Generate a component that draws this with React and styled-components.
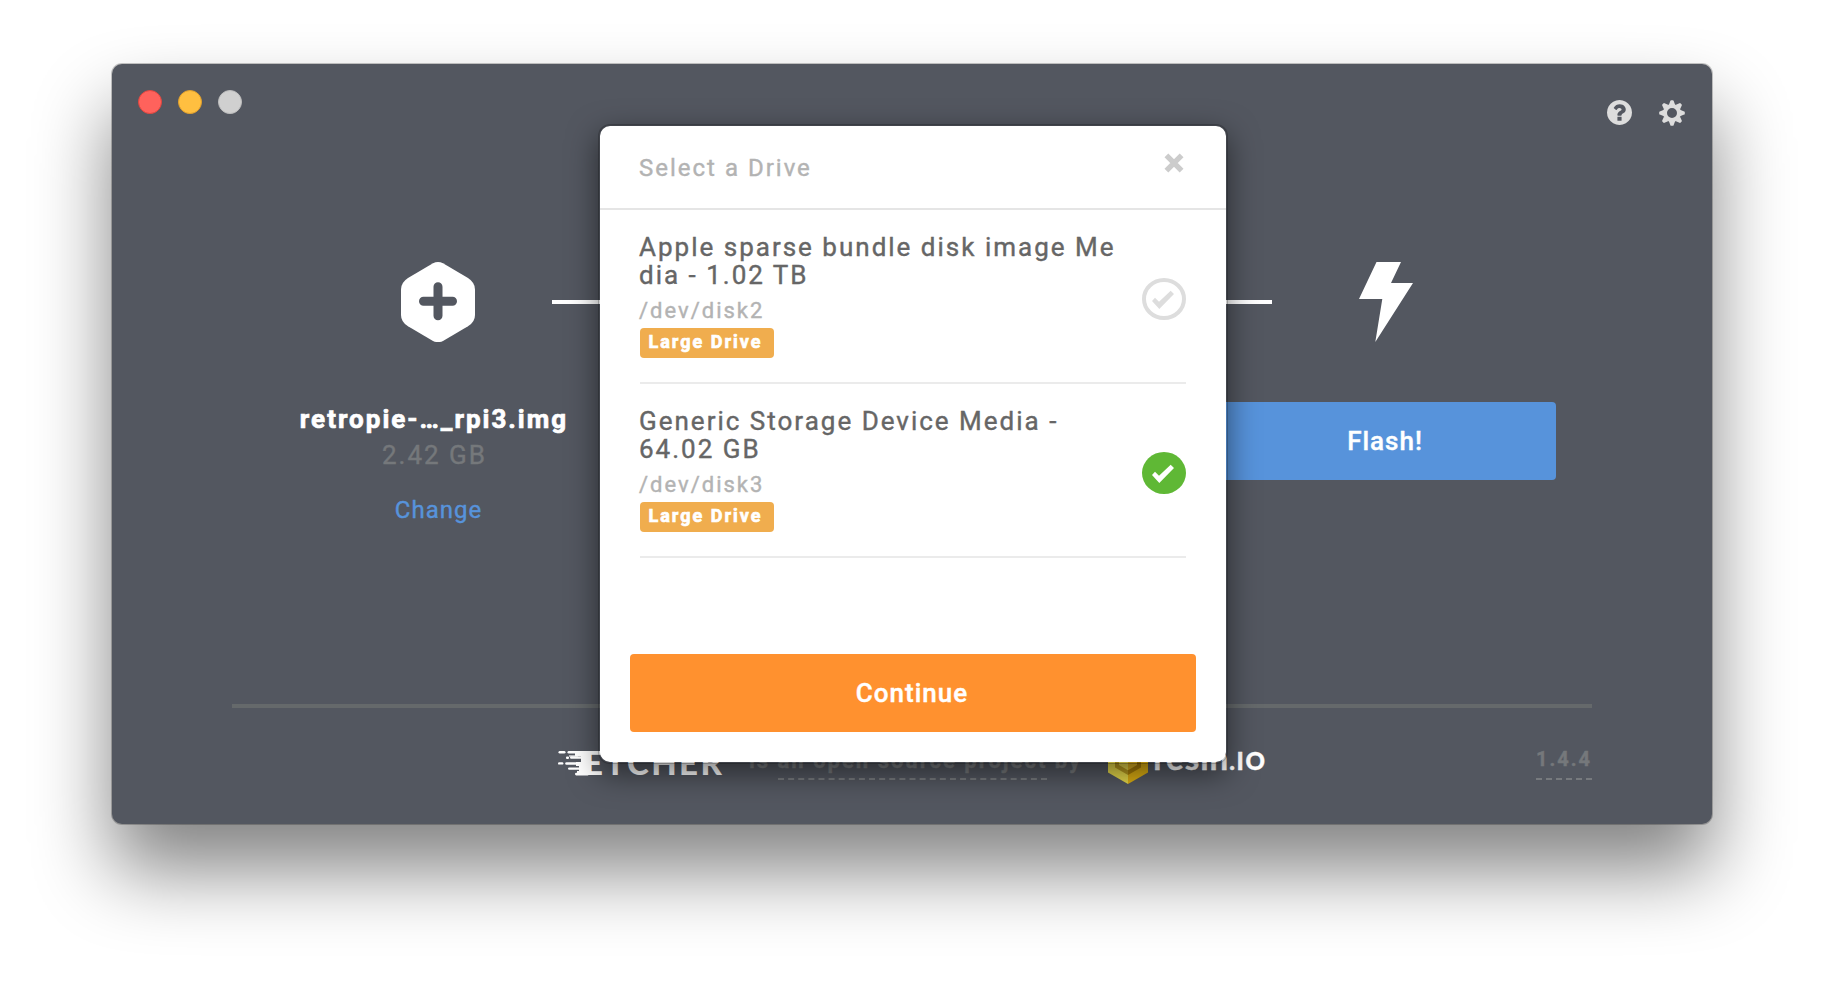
import React from 'react';
import styled, { createGlobalStyle } from 'styled-components';

const GlobalStyle = createGlobalStyle`
  * { box-sizing: border-box; }
  html, body { margin: 0; padding: 0; }
  body {
    background: #fff;
    overflow: hidden;
    font-family: Roboto, "Liberation Sans", sans-serif;
    letter-spacing: 2px;
    -webkit-text-stroke-width: 0.4px;
  }
`;

const Desktop = styled.div`
  height: 984px;
  padding: 64px 112px;
  background: #fff;
`;

const Window = styled.main`
  position: relative;
  display: flex;
  flex-direction: column;
  width: 1600px;
  height: 760px;
  border-radius: 10px;
  background: #535760;
  box-shadow: 0 0 0 1px rgba(0, 0, 0, 0.22), 0 46px 78px rgba(0, 0, 0, 0.49);
`;

const TitleBar = styled.header`
  display: flex;
  justify-content: space-between;
  height: 198px;
  padding: 26px 27px 0 26px;
`;

const TrafficLights = styled.div`
  display: flex;
  gap: 16px;
`;

const Light = styled.span`
  width: 24px;
  height: 24px;
  border-radius: 50%;
  background: ${(p) => p.$fill};
  border: 1px solid ${(p) => p.$edge};
`;

const Tools = styled.nav`
  display: flex;
  gap: 27px;
  padding-top: 10px;
`;

const Steps = styled.div`
  display: flex;
  align-items: center;
  height: 80px;
  padding-left: 289px;
`;

const Connector = styled.div`
  width: 720px;
  height: 4px;
  margin: 0 87px 0 77px;
  background: #fff;
`;

const Columns = styled.section`
  display: grid;
  grid-template-columns: repeat(3, 474px);
  justify-content: center;
  height: 362px;
  padding-top: 60px;
`;

const Column = styled.div`
  display: flex;
  flex-direction: column;
  align-items: center;
`;

const FileName = styled.div`
  margin: 2px 8px 0 0;
  font-size: 26px;
  line-height: 30px;
  font-weight: 700;
  color: #fff;
  -webkit-text-stroke-width: 0.7px;
`;

const FileSize = styled.div`
  margin: 6px 7px 0 0;
  font-size: 26px;
  line-height: 30px;
  color: #75787b;
`;

const ChangeLink = styled.a`
  margin: 26px 0 0 1px;
  font-size: 24px;
  line-height: 28px;
  letter-spacing: 1px;
  color: #5793db;
`;

const Button = styled.button`
  width: ${(p) => p.$width}px;
  height: 78px;
  flex: none;
  padding: 0 2px 0 0;
  border: 0;
  border-radius: 4px;
  background: ${(p) => p.$color};
  color: #fff;
  font: 500 26px/30px Roboto, "Liberation Sans", sans-serif;
  letter-spacing: 1px;
`;

const Footer = styled.footer`
  display: flex;
  align-items: flex-start;
  margin: 0 120px;
  border-top: 4px solid #65696b;
`;

const EtcherLogo = styled.div`
  display: flex;
  width: 168px;
  margin: 34px 0 0 326px;
  svg { flex: none; margin: 9px -6px 0 0; }
`;

const EtcherName = styled.span`
  font: 900 33px/40px Lato, sans-serif;
  letter-spacing: 2.4px;
  color: #fff;
  -webkit-text-stroke-width: 0;
`;

const Tagline = styled.div`
  margin: 40px 0 0 23px;
  white-space: pre;
  font-size: 22px;
  line-height: 25px;
  font-weight: 700;
  color: #75787b;
`;

const DashedLink = styled.a`
  display: inline-block;
  padding-bottom: 5px;
  border-bottom: 2px dashed #777a7e;
`;

const ResinLogo = styled.div`
  display: flex;
  align-items: flex-start;
  margin: 29px 0 0 26px;
  svg { margin: 1px 5px 0 0; }
`;

const ResinName = styled.span`
  font: 700 33px/40px Lato, sans-serif;
  letter-spacing: 1px;
  color: #fff;
`;

const ResinSuffix = styled.span`
  font-size: 24px;
  font-weight: 900;
  letter-spacing: 1.7px;
`;

const Version = styled.a`
  margin: 39px 0 0 auto;
  padding-bottom: 7px;
  border-bottom: 2px dashed #777a7e;
  font-size: 20px;
  line-height: 24px;
  font-weight: 700;
  color: #75787b;
`;

const Modal = styled.section`
  position: absolute;
  left: 486px;
  top: 60px;
  display: flex;
  flex-direction: column;
  width: 630px;
  height: 640px;
  border: 2px solid rgba(0, 0, 0, 0.2);
  border-radius: 12px;
  background: #fff;
  background-clip: padding-box;
  box-shadow: 0 10px 30px rgba(0, 0, 0, 0.5);
`;

const ModalHeader = styled.header`
  display: flex;
  justify-content: space-between;
  height: 84px;
  padding: 28px 42px 0 39px;
  border-bottom: 2px solid #e5e5e5;
`;

const ModalTitle = styled.h4`
  margin: 0;
  font-size: 24px;
  line-height: 28px;
  font-weight: 400;
  color: #b3b3b3;
`;

const CloseIcon = styled.svg`
  margin-top: -1px;
`;

const DriveList = styled.ul`
  flex: 1;
  margin: 0;
  padding: 0 40px;
  list-style: none;
`;

const DriveItem = styled.li`
  display: flex;
  justify-content: space-between;
  height: 174px;
  padding-top: 23px;
  border-bottom: 2px solid #ebebeb;
  > svg { flex: none; margin-top: 45px; }
`;

const DriveInfo = styled.div`
  margin-left: -1px;
`;

const DriveName = styled.div`
  white-space: pre;
  font-size: 26px;
  line-height: 28px;
  color: #666;
`;

const DrivePath = styled.div`
  margin-top: 9px;
  font-size: 22px;
  line-height: 25px;
  color: #b3b3b3;
`;

const Badge = styled.span`
  display: block;
  width: 134px;
  height: 30px;
  margin: 5px 0 0 1px;
  padding: 1px 0 0 8.5px;
  border-radius: 4px;
  background: #f0ad4e;
  font-size: 18px;
  line-height: 25px;
  font-weight: 700;
  letter-spacing: 2px;
  color: #fff;
  -webkit-text-stroke-width: 0.7px;
`;

const ModalFooter = styled.footer`
  padding: 0 30px 30px;
`;

const CHECK = '10,23 13,19.7 17,23.7 28.7,12.7 32,16 17.3,31';

function CheckMark({ selected }) {
  return (
    <svg width="44" height="42" viewBox="0 0 44 42">
      {selected ? (
        <ellipse cx="22" cy="21" rx="22" ry="21" fill="#5fb835" />
      ) : (
        <ellipse cx="22" cy="21" rx="20" ry="19" fill="none" stroke="#ddd" strokeWidth="4" />
      )}
      <polygon points={CHECK} fill={selected ? '#fff' : '#ddd'} />
    </svg>
  );
}

function HelpIcon() {
  return (
    <svg width="25" height="25" viewBox="128 128 1536 1536" fill="#ddd">
      <path d="M1024 1376v-192q0-14-9-23t-23-9h-192q-14 0-23 9t-9 23v192q0 14 9 23t23 9h192q14 0 23-9t9-23zM1280 704q0-88-55.5-163t-138.5-116-170-41q-243 0-371 213-15 24 8 42l132 100q7 6 19 6 16 0 25-12 53-68 86-92 34-24 86-24 48 0 85.5 26t37.5 59q0 38-20 61t-68 45q-63 28-115.5 86.5t-52.5 125.5v36q0 14 9 23t23 9h192q14 0 23-9t9-23q0-19 21.5-49.5t54.5-49.5q32-18 49-28.5t46-35 44.5-48 28-60.5 12.5-81zM1664 896q0 209-103 385.5t-279.5 279.5-385.5 103-385.5-103-279.5-279.5-103-385.5 103-385.5 279.5-279.5 385.5-103 385.5 103 279.5 279.5 103 385.5z" />
    </svg>
  );
}

function GearIcon() {
  return (
    <svg width="26" height="26" viewBox="-13 -13 26 26" fill="#ddd">
      {[0, 45, 90, 135, 180, 225, 270, 315].map((a) => (
        <path key={a} transform={`rotate(${a})`} d="M-3.2-8 L-1.6-12.2 Q-1.4-12.8-0.9-12.8 H0.9 Q1.4-12.8 1.6-12.2 L3.2-8Z" />
      ))}
      <circle r="7" fill="none" stroke="#ddd" strokeWidth="4" />
    </svg>
  );
}

function ImageIcon() {
  return (
    <svg width="74" height="80" viewBox="0 0 74 80">
      <path
        fill="#fff"
        d="M32 1.3Q37-1.2 42 1.3L67 16Q74 20.5 74 27.5V53Q74 60 67 64.3L42 78.9Q37 81.4 32 78.9L7 64.3Q0 60 0 53V27.5Q0 20.5 7 16Z"
      />
      <path d="M37 24.8V53.8M22.5 39.3H51.5" stroke="#535760" strokeWidth="9" strokeLinecap="round" />
    </svg>
  );
}

function BoltIcon() {
  return (
    <svg width="54" height="80" viewBox="0 0 54 80">
      <polygon fill="#fff" points="17.5,0 42,0 32,21 54,21 16.3,80 23.3,37 0,37" />
    </svg>
  );
}

function SpeedLines() {
  return (
    <svg width="32" height="25" viewBox="0 0 32 25" fill="#fff">
      <rect x="0.5" y="0" width="7" height="2.6" rx="1.3" />
      <rect x="9.5" y="0" width="22" height="2.6" rx="1.3" />
      <rect x="11" y="4.4" width="9" height="1.2" />
      <rect x="8" y="5.6" width="3" height="2.4" rx="1" />
      <rect x="12" y="5.2" width="19" height="2.6" rx="1.2" />
      <rect x="0" y="11.2" width="5.4" height="2.4" rx="1.2" />
      <rect x="7.2" y="11.2" width="22" height="2.6" rx="1.3" />
      <rect x="10" y="16.4" width="20" height="2.4" rx="1.2" />
      <rect x="17" y="21.8" width="14" height="2.6" rx="1.3" />
      <path d="M17 0H31V24H19V20H21V15H18V11H23V5H17Z" />
    </svg>
  );
}

function ResinCube() {
  return (
    <svg width="40" height="46" viewBox="0 0 40 46">
      <polygon fill="#fff08a" points="20,0 40,11.5 20,23 0,11.5" />
      <polygon fill="#e6d84a" points="0,11.5 20,23 20,46 0,34.5" />
      <polygon fill="#dcae12" points="40,11.5 20,23 20,46 40,34.5" />
      <polygon fill="#b79a20" points="7,15 20,22 20,37 7,29.5" />
      <polygon fill="#a67c08" points="33,15 20,22 20,37 33,29.5" />
      <polygon fill="#e3d24c" points="11,14 20,19 20,32.3 11,27" />
      <polygon fill="#d9ae22" points="29,14 20,19 20,32.3 29,27" />
    </svg>
  );
}

const drives = [
  { name: 'Apple sparse bundle disk image Me\ndia - 1.02 TB', path: '/dev/disk2', selected: false },
  { name: 'Generic Storage Device Media -\n64.02 GB', path: '/dev/disk3', selected: true },
];

export default function App() {
  return (
    <Desktop>
      <GlobalStyle />
      <Window>
        <TitleBar>
          <TrafficLights>
            <Light $fill="#ff625c" $edge="#e2463f" />
            <Light $fill="#ffbf40" $edge="#e1a02c" />
            <Light $fill="#d0d0d0" $edge="#bdbdbd" />
          </TrafficLights>
          <Tools>
            <HelpIcon />
            <GearIcon />
          </Tools>
        </TitleBar>

        <Steps>
          <ImageIcon />
          <Connector />
          <BoltIcon />
        </Steps>

        <Columns>
          <Column>
            <FileName>retropie-…_rpi3.img</FileName>
            <FileSize>2.42 GB</FileSize>
            <ChangeLink>Change</ChangeLink>
          </Column>
          <Column />
          <Column>
            <Button $width={340} $color="#5793db">Flash!</Button>
          </Column>
        </Columns>

        <Footer>
          <EtcherLogo>
            <SpeedLines />
            <EtcherName>ETCHER</EtcherName>
          </EtcherLogo>
          <Tagline>
            {'is '}
            <DashedLink>an open source project</DashedLink>
            {' by'}
          </Tagline>
          <ResinLogo>
            <ResinCube />
            <ResinName>
              resin<ResinSuffix>.IO</ResinSuffix>
            </ResinName>
          </ResinLogo>
          <Version>1.4.4</Version>
        </Footer>

        <Modal>
          <ModalHeader>
            <ModalTitle>Select a Drive</ModalTitle>
            <CloseIcon width="20" height="20" viewBox="0 0 20 20">
              <path d="M2.4 2.4L17.6 17.6M17.6 2.4L2.4 17.6" stroke="#ccc" strokeWidth="5.4" />
            </CloseIcon>
          </ModalHeader>
          <DriveList>
            {drives.map((d) => (
              <DriveItem key={d.path}>
                <DriveInfo>
                  <DriveName>{d.name}</DriveName>
                  <DrivePath>{d.path}</DrivePath>
                  <Badge>Large Drive</Badge>
                </DriveInfo>
                <CheckMark selected={d.selected} />
              </DriveItem>
            ))}
          </DriveList>
          <ModalFooter>
            <Button $width={566} $color="#ff912f">Continue</Button>
          </ModalFooter>
        </Modal>
      </Window>
    </Desktop>
  );
}
